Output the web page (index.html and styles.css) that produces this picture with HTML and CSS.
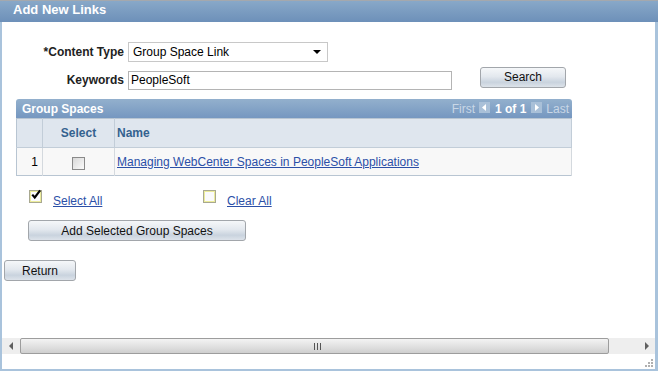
FILE: index.html
```html
<!DOCTYPE html>
<html lang="en">
<head>
    <meta charset="UTF-8">
    <title>Add New Links</title>
    <link rel="stylesheet" href="styles.css">
</head>
<body>

    <div class="window">
        <header class="title_bar">
            <h1>Add New Links</h1>
        </header>

        <div class="pane">
            <section class="content">

                <div class="field">
                    <label for="contentType">*Content Type</label>
                    <div class="select" id="contentType">
                        <span>Group Space Link</span>
                        <span class="caret"></span>
                    </div>
                </div>

                <div class="field field_keywords">
                    <label for="keywords">Keywords</label>
                    <input id="keywords" type="text" value="PeopleSoft">
                    <button class="btn btn_search" type="button">Search</button>
                </div>

                <div class="grid">
                    <div class="grid_head">
                        <span class="grid_title">Group Spaces</span>
                        <span class="pager">
                            <span class="pager_off">First</span>
                            <span class="pager_arrow">
                                <svg width="7" height="9" viewBox="0 0 7 9"><path d="M5 1 L1 4.5 L5 8 Z" fill="#fff"/></svg>
                            </span>
                            <b>1 of 1</b>
                            <span class="pager_arrow">
                                <svg width="7" height="9" viewBox="0 0 7 9"><path d="M2 1 L6 4.5 L2 8 Z" fill="#fff"/></svg>
                            </span>
                            <span class="pager_off">Last</span>
                        </span>
                    </div>
                    <table>
                        <thead>
                            <tr>
                                <th class="col_num"></th>
                                <th class="col_sel">Select</th>
                                <th class="col_name">Name</th>
                            </tr>
                        </thead>
                        <tbody>
                            <tr>
                                <td class="col_num">1</td>
                                <td class="col_sel"><span class="cb_grid"></span></td>
                                <td class="col_name"><a href="#">Managing WebCenter Spaces in PeopleSoft Applications</a></td>
                            </tr>
                        </tbody>
                    </table>
                </div>

                <div class="bulk">
                    <div class="bulk_item">
                        <span class="cb_img">
                            <svg width="12" height="12" viewBox="0 0 12 12"><path d="M1.5 5.5 L4.5 9 L11 0.5" fill="none" stroke="#000" stroke-width="2.6"/></svg>
                        </span>
                        <a href="#">Select All</a>
                    </div>
                    <div class="bulk_item">
                        <span class="cb_img"></span>
                        <a href="#">Clear All</a>
                    </div>
                </div>

                <button class="btn btn_add" type="button">Add Selected Group Spaces</button>

                <button class="btn btn_return" type="button">Return</button>

            </section>

            <div class="hscroll">
                <span class="scroll_btn">
                    <svg width="5" height="8" viewBox="0 0 5 8"><path d="M4 0 L0 4 L4 8 Z" fill="#606060"/></svg>
                </span>
                <div class="thumb">
                    <span class="grip"></span>
                </div>
                <div class="track"></div>
                <span class="scroll_btn">
                    <svg width="5" height="8" viewBox="0 0 5 8"><path d="M1 0 L5 4 L1 8 Z" fill="#606060"/></svg>
                </span>
            </div>

            <div class="status">
                <svg class="resizer" width="10" height="10" viewBox="0 0 10 10">
                    <rect x="7" y="1" width="2" height="2" fill="#b0b0b0"/>
                    <rect x="4" y="4" width="2" height="2" fill="#b0b0b0"/>
                    <rect x="7" y="4" width="2" height="2" fill="#b0b0b0"/>
                    <rect x="1" y="7" width="2" height="2" fill="#b0b0b0"/>
                    <rect x="4" y="7" width="2" height="2" fill="#b0b0b0"/>
                    <rect x="7" y="7" width="2" height="2" fill="#b0b0b0"/>
                </svg>
            </div>
        </div>
    </div>

</body>
</html>
```

FILE: styles.css
```css
* {
    padding: 0;
    margin: 0;
    box-sizing: border-box;
    font-family: 'Liberation Sans', Arial, sans-serif;
    font-size: 12px;
    color: black;
}
body {
    width: 658px;
    height: 371px;
    overflow: hidden;
    background: #fff;
}
a {
    color: #2b4fa7;
    text-decoration: underline;
}
.window {
    display: flex;
    flex-direction: column;
    width: 658px;
    height: 371px;
}
.title_bar {
    height: 22px;
    padding: 0 0 0 13px;
    border-top: 1px solid #a4a8ad;
    background: linear-gradient(#88a8c8, #6d90b9);
}
.title_bar h1 {
    font-size: 13px;
    font-weight: bold;
    line-height: 17px;
    color: #fff;
}
.pane {
    flex: 1;
    display: flex;
    flex-direction: column;
    min-height: 0;
    border-left: 2px solid #a9c3dc;
    border-right: 3px solid #a9c3dc;
    border-bottom: 2px solid #a9c3dc;
}
.content {
    flex: 1;
    padding: 20px 0 0 0;
}
.field {
    display: flex;
    align-items: center;
}
.field label {
    width: 122px;
    margin-right: 4px;
    text-align: right;
    font-weight: bold;
    color: #222;
}
.select {
    display: flex;
    align-items: center;
    justify-content: space-between;
    width: 200px;
    height: 20px;
    padding: 0 6px 0 4px;
    border: 1px solid #c8c8c8;
    background: #fff;
}
.select span {
    font-size: 12px;
}
.caret {
    width: 0;
    height: 0;
    border-left: 4px solid transparent;
    border-right: 4px solid transparent;
    border-top: 4px solid #000;
}
.field_keywords {
    margin-top: 5px;
    height: 20px;
}
.field_keywords label {
    margin-top: 6px;
}
.field_keywords input {
    width: 324px;
    height: 19px;
    margin-top: 6px;
    padding: 0 2px;
    border: 1px solid #b4b4b4;
    outline: 0;
    font-size: 12px;
}
.btn {
    display: block;
    height: 21px;
    border: 1px solid #a2a6ab;
    border-radius: 3px;
    background: linear-gradient(#f5f7f9 0%, #e3e8ee 45%, #c9d3de 75%, #dde3ea 100%);
    font-size: 12px;
    color: #111;
}
.btn_search {
    width: 86px;
    margin-left: 28px;
}
.grid {
    width: 556px;
    margin: 12px 0 0 14px;
}
.grid_head {
    display: flex;
    align-items: center;
    justify-content: space-between;
    height: 19px;
    padding: 0 3px 0 6px;
    border-radius: 3px 3px 0 0;
    background: linear-gradient(#93b0cd, #7597c0);
}
.grid_title {
    font-weight: bold;
    color: #fff;
}
.pager {
    display: flex;
    align-items: center;
    gap: 4px;
}
.pager span, .pager b {
    color: #dbe5ef;
}
.pager_off {
    color: #c9d7e6 !important;
}
.pager b {
    margin: 0 1px;
    color: #fff;
}
.pager_arrow {
    display: flex;
    align-items: center;
    justify-content: center;
    width: 11px;
    height: 11px;
    margin-top: -3px;
    background: #a9c0d8;
}
.grid table {
    width: 100%;
    border-collapse: collapse;
    border: 1px solid #b8c5d2;
}
.grid th {
    height: 29px;
    background: #dfe6ee;
    border-right: 1px solid #c2cdd8;
    border-bottom: 1px solid #c2cdd8;
    font-weight: bold;
    color: #34628f;
}
.grid td {
    height: 28px;
    background: #f8f8f8;
    border-right: 1px solid #d4d9de;
}
.col_num {
    width: 26px;
    padding-right: 4px;
    text-align: right;
}
.col_sel {
    width: 72px;
    text-align: center;
}
th.col_name, td.col_name {
    padding-left: 2px;
    text-align: left;
}
.cb_grid {
    display: inline-block;
    width: 13px;
    height: 13px;
    margin-top: 3px;
    border: 1px solid #8a8a8a;
    background: linear-gradient(135deg, #d8d8d8, #fbfbfb);
    vertical-align: middle;
}
.bulk {
    display: flex;
    margin: 14px 0 0 27px;
}
.bulk_item {
    display: flex;
    align-items: flex-start;
    width: 174px;
}
.cb_img {
    display: flex;
    align-items: center;
    justify-content: center;
    width: 13px;
    height: 13px;
    border: 1px solid #a8a890;
    box-shadow: inset 0 0 0 1px #ecec9c;
    background: #fafafc;
}
.cb_img svg {
    margin: -3px 0 0 1px;
}
.bulk_item a {
    margin: 4px 0 0 11px;
}
.btn_add {
    width: 218px;
    margin: 12px 0 0 26px;
}
.btn_return {
    width: 72px;
    margin: 19px 0 0 2px;
}
.hscroll {
    display: flex;
    height: 16px;
    background: #eeeeee;
}
.scroll_btn {
    display: flex;
    align-items: center;
    justify-content: center;
    width: 18px;
}
.thumb {
    display: flex;
    align-items: center;
    justify-content: center;
    width: 589px;
    border: 1px solid #9d9d9d;
    border-radius: 2px;
    background: linear-gradient(#f3f3f3, #e2e2e2 50%, #cfcfcf);
}
.grip {
    width: 7px;
    height: 7px;
    margin-left: 6px;
    background: repeating-linear-gradient(90deg, #555 0 1px, transparent 1px 3px);
}
.track {
    flex: 1;
}
.status {
    display: flex;
    justify-content: flex-end;
    align-items: flex-end;
    height: 15px;
    padding: 0 1px 1px 0;
}
```
